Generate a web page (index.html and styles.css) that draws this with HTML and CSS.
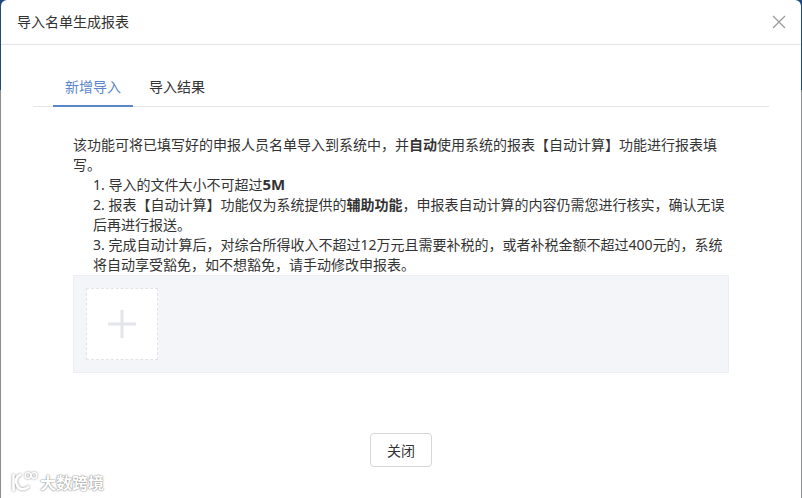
FILE: index.html
```html
<!DOCTYPE html>
<html lang="zh-CN">
<head>
    <meta charset="UTF-8">
    <title>导入名单生成报表</title>
    <link rel="stylesheet" href="styles.css">
</head>
<body>

    <div class="edge"></div>

    <div class="modal">
        <div class="modal-header">
            <span class="modal-title">导入名单生成报表</span>
            <svg class="close-icon" width="14" height="14" viewBox="0 0 14 14">
                <path d="M1 1L13 13M13 1L1 13" stroke="#999" stroke-width="1.2" fill="none"/>
            </svg>
        </div>

        <div class="modal-body">
            <!-- Tabs -->
            <div class="tabs">
                <div class="tab active">新增导入</div>
                <div class="tab">导入结果</div>
            </div>

            <div class="notice">
                <p>该功能可将已填写好的申报人员名单导入到系统中，并<b>自动</b>使用系统的报表【自动计算】功能进行报表填写。</p>
                <ol class="rules">
                    <li>1. 导入的文件大小不可超过<b class="size-limit">5M</b></li>
                    <li>2. 报表【自动计算】功能仅为系统提供的<b>辅助功能</b>，申报表自动计算的内容仍需您进行核实，确认无误后再进行报送。</li>
                    <li>3. 完成自动计算后，对综合所得收入不超过12万元且需要补税的，或者补税金额不超过400元的，系统将自动享受豁免，如不想豁免，请手动修改申报表。</li>
                </ol>
            </div>

            <!-- Upload -->
            <div class="upload-area">
                <div class="upload-btn">
                    <svg width="30" height="30" viewBox="0 0 30 30">
                        <path d="M15 1V29M1 15H29" stroke="#e4e5ea" stroke-width="3" fill="none"/>
                    </svg>
                </div>
            </div>
        </div>

        <div class="modal-footer">
            <button class="btn-close">关闭</button>
        </div>
    </div>

    <!-- Watermark -->
    <div class="watermark">
        <svg width="30" height="22" viewBox="0 0 30 22">
            <g fill="none" stroke="#fff" stroke-width="2.6">
                <path d="M3.5 3V20"/>
                <path d="M11 3C6 6 5 10 7 14C9 19 15 20 19 15"/>
                <circle cx="18" cy="4.5" r="2.8" stroke-width="1.3"/>
                <circle cx="24" cy="4.5" r="2.8" stroke-width="1.3"/>
            </g>
        </svg>
        <span>大数跨境</span>
    </div>

</body>
</html>
```

FILE: styles.css
```css
* { box-sizing: border-box; }
html, body { height: 100%; margin: 0; }
body {
    font-family: "Noto Sans", "Noto Sans CJK SC", sans-serif;
    font-size: 14px;
    color: #333;
    background: #8b8d90;
    overflow: hidden;
}
.edge {
    position: absolute;
    left: 0;
    top: 0;
    width: 100%;
    height: 90px;
    background: #1f4a80;
}
.modal {
    position: relative;
    height: 498px;
    margin: 0 1px;
    background: #fff;
    border-radius: 6px 6px 0 0;
    display: flex;
    flex-direction: column;
}
.modal-header {
    height: 45px;
    padding: 0 15px 1px 16px;
    border-bottom: 1px solid #e4e5e7;
    display: flex;
    align-items: center;
    justify-content: space-between;
}
.modal-title { margin-bottom: 2px; }
.modal-body { flex: 1; padding: 0 32px; }
.tabs {
    display: flex;
    height: 62px;
    margin-bottom: 28px;
    padding: 27px 0 0 20px;
    border-bottom: 1px solid #e4e5e7;
}
.tab {
    height: 35px;
    margin-right: 4px;
    padding: 0 12px;
    line-height: 30px;
}
.tab.active {
    color: #5b86cc;
    border-bottom: 2px solid #5b86cc;
}
.notice { margin: 0 40px; line-height: 20px; }
.notice p { margin: 0; }
.rules { list-style: none; margin: 0; padding: 0 0 0 20px; }
.size-limit { font-size: 15px; line-height: 1; }
.upload-area {
    margin: 0 40px;
    height: 98px;
    padding: 12px 12px;
    background: #f4f5f9;
    border: 1px solid #eceef2;
}
.upload-btn {
    width: 72px;
    height: 72px;
    background: #fff;
    border: 1px dashed #e2e3e8;
    display: flex;
    align-items: center;
    justify-content: center;
}
.modal-footer {
    height: 98px;
    padding-top: 33px;
    display: flex;
    justify-content: center;
}
.btn-close {
    width: 62px;
    height: 34px;
    font: inherit;
    color: #333;
    background: #fff;
    border: 1px solid #d5d6d8;
    border-radius: 4px;
}
.watermark {
    position: absolute;
    left: 10px;
    bottom: 4px;
    display: flex;
    align-items: center;
    color: #fff;
    font-size: 16px;
    font-weight: 700;
    text-shadow: 0 0 1px #888, 0 0 2px #888;
}
.watermark svg { filter: drop-shadow(0 0 1px #888); }
```
